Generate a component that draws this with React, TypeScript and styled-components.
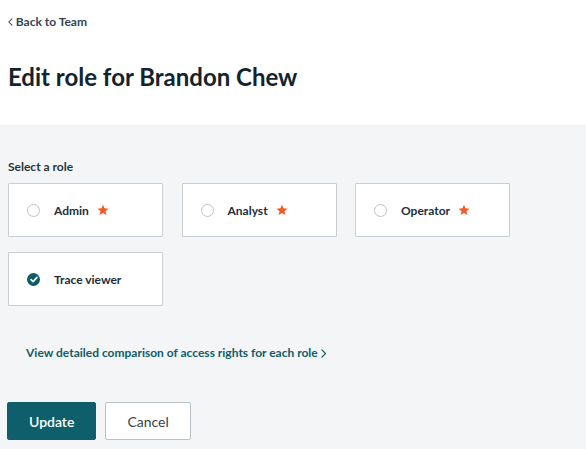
import styled, { createGlobalStyle } from "styled-components";

const GlobalStyle = createGlobalStyle`
  html, body {
    margin: 0;
    padding: 0;
    background: #f4f5f7;
    font-family: Lato, "Liberation Sans", sans-serif;
    color: #16262f;
  }
`;

const Header = styled.header`
  background: #ffffff;
  padding: 10px 8px 0 8px;
  height: 125px;
  box-sizing: border-box;
`;

const BackLink = styled.a`
  display: inline-flex;
  align-items: center;
  gap: 3px;
  font-size: 12px;
  font-weight: 700;
  color: #33444f;
  text-decoration: none;
  line-height: 16px;
`;

const Title = styled.h1`
  margin: 32px 0 0 0;
  font-size: 24px;
  font-weight: 700;
  line-height: 30px;
  color: #13242d;
`;

const Section = styled.main`
  background: #f4f5f7;
  min-height: 324px;
  padding: 34px 8px 0 8px;
  box-sizing: border-box;
`;

const Label = styled.div`
  font-size: 12px;
  font-weight: 700;
  color: #24353f;
  line-height: 16px;
  margin-bottom: 8px;
`;

const Grid = styled.div`
  display: grid;
  grid-template-columns: repeat(3, 155px);
  column-gap: 18.5px;
  row-gap: 15px;
`;

const Card = styled.label`
  display: flex;
  align-items: center;
  gap: 14px;
  height: 54px;
  box-sizing: border-box;
  padding-left: 18px;
  background: #ffffff;
  border: 1px solid #c9ced3;
  border-radius: 1px;
  cursor: pointer;
`;

const Radio = styled.span<{ $checked?: boolean }>`
  width: 13px;
  height: 13px;
  box-sizing: border-box;
  border-radius: 50%;
  border: ${(p) => (p.$checked ? "none" : "1px solid #bcc3c9")};
  background: ${(p) => (p.$checked ? "#0f5c69" : "#ffffff")};
  display: inline-flex;
  align-items: center;
  justify-content: center;
  flex-shrink: 0;
`;

const RoleName = styled.span`
  font-size: 12px;
  font-weight: 700;
  color: #1d2e38;
  display: inline-flex;
  align-items: center;
  gap: 8px;
`;

const CompareLink = styled.a`
  display: inline-flex;
  align-items: center;
  gap: 3px;
  margin: 39px 0 0 18px;
  font-size: 12px;
  font-weight: 700;
  color: #105c68;
  text-decoration: none;
  line-height: 16px;
`;

const Actions = styled.div`
  display: flex;
  gap: 9px;
  margin-top: 41px;
  margin-left: -1px;
`;

const Button = styled.button<{ $primary?: boolean }>`
  height: 38px;
  box-sizing: border-box;
  padding: 0 21px;
  border-radius: 2px;
  font-family: Lato, "Liberation Sans", sans-serif;
  font-size: 14px;
  font-weight: ${(p) => (p.$primary ? 600 : 400)};
  background: ${(p) => (p.$primary ? "#0e5f6b" : "#ffffff")};
  color: ${(p) => (p.$primary ? "#ffffff" : "#33444f")};
  border: 1px solid ${(p) => (p.$primary ? "#0e5f6b" : "#b9c0c6")};
  cursor: pointer;
`;

const Chevron = ({ dir, size = 8 }: { dir: "left" | "right"; size?: number }) => (
  <svg width={size * 0.6} height={size} viewBox="0 0 6 10" fill="none">
    <path
      d={dir === "left" ? "M5 1 L1 5 L5 9" : "M1 1 L5 5 L1 9"}
      stroke="currentColor"
      strokeWidth="1.3"
      strokeLinecap="round"
      strokeLinejoin="round"
    />
  </svg>
);

const Star = () => (
  <svg width="12" height="12" viewBox="0 0 24 24">
    <path
      d="M12 1.5l3.1 7.2 7.8.6-5.9 5.1 1.8 7.6L12 18l-6.8 4 1.8-7.6-5.9-5.1 7.8-.6z"
      fill="#f25a26"
    />
  </svg>
);

const Check = () => (
  <svg width="8" height="7" viewBox="0 0 8 7" fill="none">
    <path d="M1 3.6 L3.1 5.6 L7 1.4" stroke="#ffffff" strokeWidth="1.6" strokeLinecap="round" strokeLinejoin="round" />
  </svg>
);

const roles = [
  { name: "Admin", star: true, checked: false },
  { name: "Analyst", star: true, checked: false },
  { name: "Operator", star: true, checked: false },
  { name: "Trace viewer", star: false, checked: true },
];

export default function App() {
  return (
    <>
      <GlobalStyle />
      <Header>
        <BackLink href="#">
          <Chevron dir="left" size={8} />
          Back to Team
        </BackLink>
        <Title>Edit role for Brandon Chew</Title>
      </Header>
      <Section>
        <Label>Select a role</Label>
        <Grid>
          {roles.map((r) => (
            <Card key={r.name}>
              <Radio $checked={r.checked}>{r.checked && <Check />}</Radio>
              <RoleName>
                {r.name}
                {r.star && <Star />}
              </RoleName>
            </Card>
          ))}
        </Grid>
        <CompareLink href="#">
          View detailed comparison of access rights for each role
          <Chevron dir="right" size={9} />
        </CompareLink>
        <Actions>
          <Button $primary>Update</Button>
          <Button>Cancel</Button>
        </Actions>
      </Section>
    </>
  );
}
